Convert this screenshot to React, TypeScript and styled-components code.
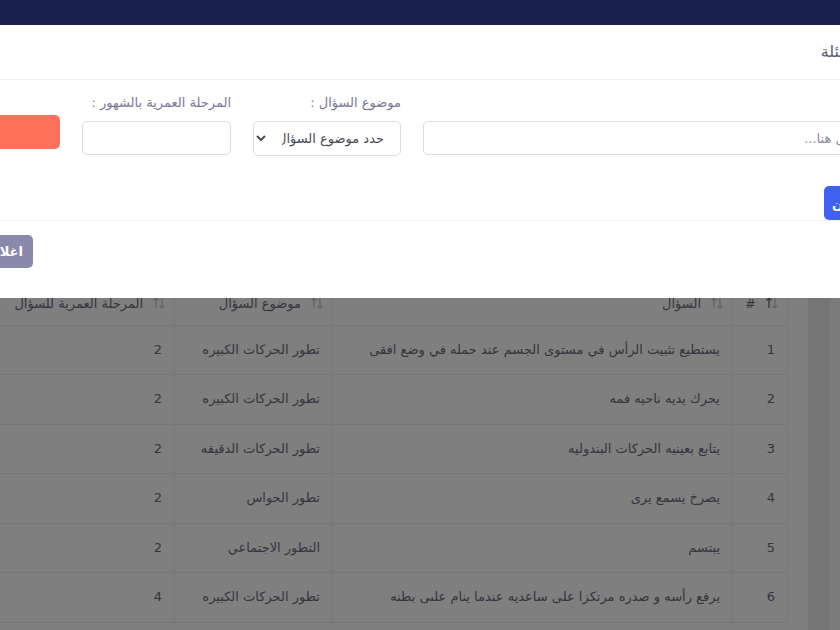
import React from "react";
import styled, { createGlobalStyle } from "styled-components";

const GlobalStyle = createGlobalStyle`
  html, body {
    margin: 0;
    padding: 0;
    overflow: hidden;
    background: #f4f4f4;
  }
  body {
    direction: rtl;
    font-family: "DejaVu Sans", "Noto Sans", sans-serif;
    color: #6e6b7b;
  }
  * {
    box-sizing: border-box;
  }
`;

const Page = styled.div`
  width: 100%;
  min-height: 630px;
  display: flex;
  flex-direction: column;
`;

const TopBar = styled.header`
  height: 180px;
  background: #34429f;
  display: flex;
  justify-content: flex-end;
  padding: 30px 130px 0 0;
`;

const SearchGhost = styled.div`
  width: 72px;
  height: 28px;
  border-radius: 6px;
  background: rgba(255, 255, 255, 0.06);
`;

const Main = styled.main`
  flex: 1;
  display: flex;
  padding-right: 11px;
  background: #f4f4f4;
`;

const Gutter = styled.div`
  flex: 0 0 21px;
  background: #ebebeb;
`;

const Card = styled.section`
  flex: 1;
  min-width: 0;
  background: #fff;
  padding: 104px 20px 0 0;
`;

const Table = styled.table`
  width: 813px;
  table-layout: fixed;
  border-collapse: collapse;
  font-size: 13px;
  color: #6e6b7b;
`;

const Th = styled.th<{ $w?: number }>`
  width: ${(p) => (p.$w ? `${p.$w}px` : "auto")};
  text-align: right;
  font-weight: 500;
  font-size: 13px;
  height: 41px;
  padding: 0 8px;
  border: 1px solid #efeff2;
  border-top: none;
  white-space: nowrap;
`;

const HeadInner = styled.span`
  display: inline-flex;
  align-items: center;
  gap: 9px;
`;

const Td = styled.td`
  text-align: right;
  padding: 14px 12px;
  line-height: 20.5px;
  border: 1px solid #efeff2;
  white-space: nowrap;
  overflow: hidden;
`;

const Overlay = styled.div`
  position: fixed;
  inset: 0;
  background: rgba(0, 0, 0, 0.5);
`;

const Modal = styled.div`
  position: absolute;
  top: 25px;
  left: -108px;
  right: -100px;
  background: #fff;
  display: flex;
  flex-direction: column;
`;

const ModalHeader = styled.div`
  padding: 16px 32px 16px 20px;
  border-bottom: 1px solid #efeef3;
`;

const Title = styled.h5`
  margin: 0;
  font-size: 16px;
  line-height: 22px;
  font-weight: 500;
  color: #5e5873;
  white-space: nowrap;
`;

const ModalBody = styled.div`
  padding: 15px 20px 0;
  border-bottom: 1px solid #f2f1f5;
`;

const FieldRow = styled.div`
  display: flex;
  align-items: flex-start;
  gap: 22px;
`;

const Field = styled.div<{ $w?: number }>`
  flex: ${(p) => (p.$w ? `0 0 ${p.$w}px` : "1 1 auto")};
  min-width: 0;
  display: flex;
  flex-direction: column;
`;

const Label = styled.label`
  font-size: 13px;
  line-height: 16px;
  height: 16px;
  margin-bottom: 10px;
  color: #7a7896;
  white-space: nowrap;
`;

const Input = styled.input`
  width: 100%;
  height: 34px;
  border: 1px solid #dcdae2;
  border-radius: 5px;
  padding: 0 14px;
  font: inherit;
  font-size: 13px;
  color: #6e6b7b;
  background: #fff;
  outline: none;
  &::placeholder {
    color: #8c8aa3;
  }
`;

const Select = styled.select`
  width: 100%;
  height: 35px;
  border: 1px solid #dcdae2;
  border-radius: 5px;
  padding: 0 12px;
  font: inherit;
  font-size: 13px;
  color: #4b4a55;
  background: #fff;
  outline: none;
`;

const Button = styled.button<{ $tone: "coral" | "blue" | "muted"; $w: number; $h?: number }>`
  width: ${(p) => p.$w}px;
  height: ${(p) => p.$h ?? 34}px;
  border: none;
  border-radius: 5px;
  padding: 0;
  font: inherit;
  font-size: 13px;
  font-weight: 600;
  color: #fff;
  white-space: nowrap;
  background: ${(p) =>
    p.$tone === "coral" ? "#ff715b" : p.$tone === "blue" ? "#4061f0" : "#8a88ab"};
  cursor: pointer;
`;

const ButtonCol = styled.div`
  flex: 0 0 148px;
  padding-top: 20px;
`;

const ActionRow = styled.div`
  display: flex;
  justify-content: flex-start;
  margin-top: 30px;
`;

const ModalFooter = styled.div`
  display: flex;
  justify-content: flex-end;
  padding: 14px 20px 30px 86px;
`;

const SortIcon = ({ active }: { active?: boolean }) => (
  <svg width="14" height="14" viewBox="0 0 14 14" fill="none">
    <path d="M4 12V2M1.5 4.5L4 2l2.5 2.5" stroke={active ? "#6e6b7b" : "#c9c8d2"} strokeWidth="1.3" />
    <path d="M10 2v10M7.5 9.5L10 12l2.5-2.5" stroke="#c9c8d2" strokeWidth="1.3" />
  </svg>
);

const rows = [
  ["1", "يستطيع تثبيت الرأس في مستوى الجسم عند حمله في وضع افقى", "تطور الحركات الكبيره", "2"],
  ["2", "يحرك يديه ناحيه فمه", "تطور الحركات الكبيره", "2"],
  ["3", "يتابع بعينيه الحركات البندوليه", "تطور الحركات الدقيقه", "2"],
  ["4", "يصرخ يسمع يرى", "تطور الحواس", "2"],
  ["5", "يبتسم", "التطور الاجتماعي", "2"],
  ["6", "يرفع رأسه و صدره مرتكزا على ساعديه عندما ينام علىى بطنه", "تطور الحركات الكبيره", "4"],
];

const App = () => {
  return (
    <>
      <GlobalStyle />
      <Page>
        <TopBar>
          <SearchGhost />
        </TopBar>
        <Main>
          <Gutter />
          <Card>
            <Table>
              <thead>
                <tr>
                  <Th $w={55}>
                    <HeadInner>
                      <SortIcon active />#
                    </HeadInner>
                  </Th>
                  <Th $w={400}>
                    <HeadInner>
                      <SortIcon />السؤال
                    </HeadInner>
                  </Th>
                  <Th $w={158}>
                    <HeadInner>
                      <SortIcon />موضوع السؤال
                    </HeadInner>
                  </Th>
                  <Th>
                    <HeadInner>
                      <SortIcon />المرحلة العمرية للسؤال
                    </HeadInner>
                  </Th>
                </tr>
              </thead>
              <tbody>
                {rows.map((r) => (
                  <tr key={r[0]}>
                    {r.map((c, i) => (
                      <Td key={i}>{c}</Td>
                    ))}
                  </tr>
                ))}
              </tbody>
            </Table>
          </Card>
        </Main>
      </Page>
      <Overlay>
        <Modal>
          <ModalHeader>
            <Title>اختيار الأسئلة</Title>
          </ModalHeader>
          <ModalBody>
            <FieldRow>
              <Field>
                <Label>&nbsp;</Label>
                <Input placeholder="اكتب السؤال هنا..." />
              </Field>
              <Field $w={148}>
                <Label>موضوع السؤال :</Label>
                <Select defaultValue="">
                  <option value="">حدد موضوع السؤال</option>
                </Select>
              </Field>
              <Field $w={149}>
                <Label>المرحلة العمرية بالشهور :</Label>
                <Input />
              </Field>
              <ButtonCol>
                <Button $tone="coral" $w={148}>
                  بحث
                </Button>
              </ButtonCol>
            </FieldRow>
            <ActionRow>
              <Button $tone="blue" $w={96}>
                حفظ وتعيين
              </Button>
            </ActionRow>
          </ModalBody>
          <ModalFooter>
            <Button $tone="muted" $w={55} $h={33}>
              اغلاق
            </Button>
          </ModalFooter>
        </Modal>
      </Overlay>
    </>
  );
};

export default App;
